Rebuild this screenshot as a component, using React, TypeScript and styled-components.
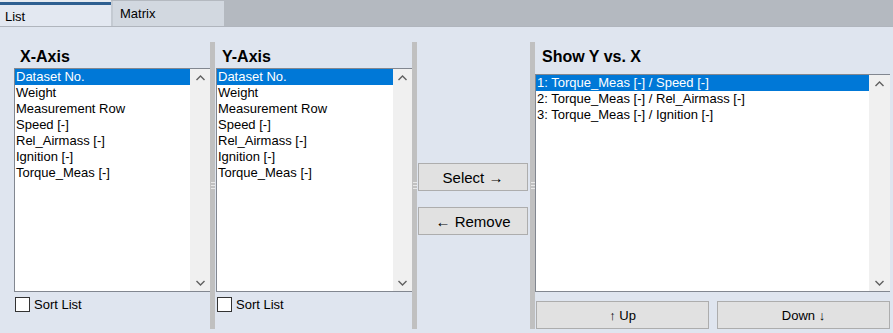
import React from "react";
import styled, { createGlobalStyle } from "styled-components";

const Global = createGlobalStyle`
  html, body { margin: 0; padding: 0; }
  body {
    background: #dfe5ef;
    font-family: "Liberation Sans", Arial, sans-serif;
    font-size: 13px;
    color: #000;
    width: 893px;
    height: 333px;
    overflow: hidden;
  }
  * { box-sizing: border-box; }
`;

const Root = styled.div`
  width: 893px;
  height: 333px;
  display: flex;
  flex-direction: column;
`;

const TabBar = styled.div`
  height: 27px;
  display: flex;
  background: #b4b9c0;
  border-bottom: 1px solid #b0b5bd;
`;

const Tab = styled.div<{ $active?: boolean }>`
  width: ${(p) => (p.$active ? 111 : 113)}px;
  height: ${(p) => (p.$active ? 26 : 25)}px;
  padding-left: ${(p) => (p.$active ? 5 : 7)}px;
  padding-top: 5px;
  margin-top: ${(p) => (p.$active ? 0 : 1)}px;
  background: ${(p) => (p.$active ? "#e3e8f1" : "#d2d8e0")};
  border-top: ${(p) => (p.$active ? "2px solid #e6eaf0" : "none")};
  border-left: ${(p) => (p.$active ? "none" : "2px solid #c4cad2")};
  box-shadow: ${(p) => (p.$active ? "inset 0 3px 0 #2e5f91" : "none")};
  line-height: ${(p) => (p.$active ? 19 : 16)}px;
  font-size: 13px;
  color: #000;
`;

const Body = styled.div`
  flex: 1;
  display: flex;
  padding: 15px 0 4px 0;
`;

const Splitter = styled.div`
  width: 5px;
  background: #c0c0c0;
  display: flex;
  flex-direction: column;
  justify-content: center;
  align-items: center;
  gap: 2px;
`;

const Grip = styled.span`
  display: block;
  width: 4px;
  height: 1px;
  background: #e8e8e8;
`;

const Panel = styled.div<{ $w?: number; $pl: number; $pr?: number }>`
  ${(p) => (p.$w ? `width: ${p.$w}px;` : "flex: 1;")}
  padding-left: ${(p) => p.$pl}px;
  padding-right: ${(p) => p.$pr ?? 0}px;
  display: flex;
  flex-direction: column;
`;

const Heading = styled.div<{ $h: number; $indent: number }>`
  height: ${(p) => p.$h}px;
  padding-top: 5px;
  padding-left: ${(p) => p.$indent}px;
  font-size: 16px;
  font-weight: bold;
  line-height: 20px;
`;

const ListBox = styled.div<{ $h: number }>`
  height: ${(p) => p.$h}px;
  background: #fff;
  border: 1px solid #828790;
  border-right: none;
  display: flex;
`;

const Items = styled.div`
  flex: 1;
  display: flex;
  flex-direction: column;
`;

const Item = styled.div<{ $selected?: boolean }>`
  height: 16px;
  line-height: 16px;
  padding-left: 1px;
  white-space: nowrap;
  background: ${(p) => (p.$selected ? "#0078d7" : "transparent")};
  color: ${(p) => (p.$selected ? "#fff" : "#000")};
`;

const ScrollBar = styled.div<{ $w: number }>`
  width: ${(p) => p.$w}px;
  background: #f0f0f0;
  display: flex;
  flex-direction: column;
  justify-content: space-between;
`;

const ScrollBtn = styled.div`
  height: 17px;
  display: flex;
  align-items: center;
  justify-content: center;
`;

const CheckRow = styled.label`
  margin-top: 5px;
  display: flex;
  align-items: center;
  gap: 4px;
  padding-left: 1px;
  height: 15px;
  line-height: 15px;
`;

const CheckBox = styled.span`
  width: 15px;
  height: 15px;
  border: 1px solid #333;
  background: #fff;
`;

const MidButtons = styled.div`
  margin-top: 121px;
  padding-left: 1px;
  display: flex;
  flex-direction: column;
  gap: 16px;
`;

const Button = styled.button<{ $big?: boolean }>`
  height: 28px;
  width: ${(p) => (p.$big ? "110px" : "auto")};
  flex: ${(p) => (p.$big ? "none" : "1")};
  background: #e1e1e1;
  border: 1px solid #adadad;
  font-family: "Liberation Sans", Arial, sans-serif;
  font-size: ${(p) => (p.$big ? 15 : 13)}px;
  color: #000;
  padding: 0;
  margin: 0;
`;

const ButtonRow = styled.div`
  margin-top: 9px;
  padding-left: 1px;
  display: flex;
  gap: 8px;
`;

const Chevron = ({ up }: { up?: boolean }) => (
  <svg width="9" height="6" viewBox="0 0 9 6">
    <polyline
      points={up ? "0.5,5 4.5,1 8.5,5" : "0.5,1 4.5,5 8.5,1"}
      fill="none"
      stroke="#606060"
      strokeWidth="1.4"
    />
  </svg>
);

const SplitBar = () => (
  <Splitter>
    <Grip />
    <Grip />
    <Grip />
  </Splitter>
);

const axisItems = [
  "Dataset No.",
  "Weight",
  "Measurement Row",
  "Speed [-]",
  "Rel_Airmass [-]",
  "Ignition [-]",
  "Torque_Meas [-]",
];

const pairItems = [
  "1: Torque_Meas [-] / Speed [-]",
  "2: Torque_Meas [-] / Rel_Airmass [-]",
  "3: Torque_Meas [-] / Ignition [-]",
];

const List = ({ items, h, sw }: { items: string[]; h: number; sw: number }) => (
  <ListBox $h={h}>
    <Items>
      {items.map((t, i) => (
        <Item key={t} $selected={i === 0}>
          {t}
        </Item>
      ))}
    </Items>
    <ScrollBar $w={sw}>
      <ScrollBtn>
        <Chevron up />
      </ScrollBtn>
      <ScrollBtn>
        <Chevron />
      </ScrollBtn>
    </ScrollBar>
  </ListBox>
);

export default function App() {
  return (
    <Root>
      <Global />
      <TabBar>
        <Tab $active>List</Tab>
        <Tab>Matrix</Tab>
      </TabBar>
      <Body>
        <Panel $w={210} $pl={14}>
          <Heading $h={26} $indent={6}>X-Axis</Heading>
          <List items={axisItems} h={224} sw={20} />
          <CheckRow>
            <CheckBox />
            Sort List
          </CheckRow>
        </Panel>
        <SplitBar />
        <Panel $w={197} $pl={1}>
          <Heading $h={26} $indent={6}>Y-Axis</Heading>
          <List items={axisItems} h={224} sw={19} />
          <CheckRow>
            <CheckBox />
            Sort List
          </CheckRow>
        </Panel>
        <SplitBar />
        <Panel $w={113} $pl={0}>
          <MidButtons>
            <Button $big>Select →</Button>
            <Button $big>← Remove</Button>
          </MidButtons>
        </Panel>
        <SplitBar />
        <Panel $pl={0} $pr={3}>
          <Heading $h={32} $indent={7}>Show Y vs. X</Heading>
          <List items={pairItems} h={218} sw={21} />
          <ButtonRow>
            <Button>↑ Up</Button>
            <Button>Down ↓</Button>
          </ButtonRow>
        </Panel>
      </Body>
    </Root>
  );
}
